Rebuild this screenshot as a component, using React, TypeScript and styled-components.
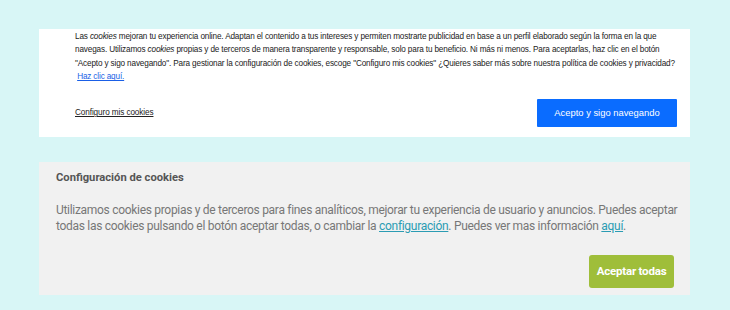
import styled, { createGlobalStyle } from 'styled-components';

const GlobalStyle = createGlobalStyle`
    html, body {
        margin: 0;
        padding: 0;
        background: #d8f6f6;
    }
`;

const CookieNotice = () => {
    return (
        <NoticeBar>
            <NoticeText>
                Las <em>cookies</em> mejoran tu experiencia online. Adaptan el contenido a tus
                intereses y permiten mostrarte publicidad en base a un perfil elaborado según la
                forma en la que navegas. Utilizamos <em>cookies</em> propias y de terceros de manera
                transparente y responsable, solo para tu beneficio. Ni más ni menos. Para aceptarlas,
                haz clic en el botón "Acepto y sigo navegando". Para gestionar la configuración de
                cookies, escoge "Configuro mis cookies" ¿Quieres saber más sobre nuestra política de
                cookies y privacidad?
                <br />
                &nbsp;<NoticeLink href="#">Haz clic aquí.</NoticeLink>
            </NoticeText>
            <NoticeActions>
                <ConfigLink href="#">Configuro mis cookies</ConfigLink>
                <AcceptButton>Acepto y sigo navegando</AcceptButton>
            </NoticeActions>
        </NoticeBar>
    );
};

const CookieSettings = () => {
    return (
        <SettingsPanel>
            <SettingsTitle>Configuración de cookies</SettingsTitle>
            <SettingsText>
                Utilizamos cookies propias y de terceros para fines analíticos, mejorar tu
                experiencia de usuario y anuncios. Puedes aceptar todas las cookies pulsando el
                botón aceptar todas, o cambiar la <SettingsLink href="#">configuración</SettingsLink>.
                Puedes ver mas información <SettingsLink href="#">aquí</SettingsLink>.
            </SettingsText>
            <SettingsActions>
                <AcceptAllButton>Aceptar todas</AcceptAllButton>
            </SettingsActions>
        </SettingsPanel>
    );
};

const App = () => {
    return (
        <>
            <GlobalStyle />
            <Page>
                <CookieNotice />
                <CookieSettings />
            </Page>
        </>
    );
};

const Page = styled.div`
    width: 651px;
    padding: 29px 0 0 39px;
    display: flex;
    flex-direction: column;
    gap: 25px;
`;

const NoticeBar = styled.div`
    background: #ffffff;
    padding: 1px 13px 10px 36px;
    font-family: 'Liberation Sans', Arial, sans-serif;
    color: #222;
`;

const NoticeText = styled.p`
    margin: 0;
    font-size: 8.2px;
    letter-spacing: -0.15px;
    line-height: 13.4px;
    width: 610px;

    em {
        font-style: italic;
    }
`;

const NoticeLink = styled.a`
    color: #1a5fe6;
    text-decoration: underline;
`;

const NoticeActions = styled.div`
    display: flex;
    align-items: center;
    justify-content: space-between;
    margin-top: 15px;
`;

const ConfigLink = styled.a`
    font-size: 8.2px;
    letter-spacing: -0.1px;
    color: #222;
    text-decoration: underline;
`;

const AcceptButton = styled.button`
    width: 140px;
    height: 28px;
    border: none;
    border-radius: 1px;
    background: #0a6cff;
    color: #ffffff;
    font-family: 'Liberation Sans', Arial, sans-serif;
    font-size: 9.4px;
    padding: 0;
`;

const SettingsPanel = styled.div`
    background: #f1f1f1;
    padding: 8px 16px 7px 17px;
    font-family: Roboto, 'Noto Sans', sans-serif;
`;

const SettingsTitle = styled.h3`
    margin: 0;
    font-size: 11.2px;
    line-height: 16px;
    font-weight: 700;
    color: #555555;
`;

const SettingsText = styled.p`
    margin: 16px 0 0;
    font-size: 12px;
    letter-spacing: -0.3px;
    line-height: 16.5px;
    color: #777777;
    width: 634px;
`;

const SettingsLink = styled.a`
    color: #2b9cb3;
    text-decoration: underline;
`;

const SettingsActions = styled.div`
    display: flex;
    justify-content: flex-end;
    margin-top: 20px;
`;

const AcceptAllButton = styled.button`
    width: 85px;
    height: 33px;
    border: none;
    border-radius: 3px;
    background: #9fbe3a;
    color: #ffffff;
    font-family: Roboto, 'Noto Sans', sans-serif;
    font-size: 11.5px;
    letter-spacing: -0.2px;
    font-weight: 700;
    padding: 0;
`;

export default App;
